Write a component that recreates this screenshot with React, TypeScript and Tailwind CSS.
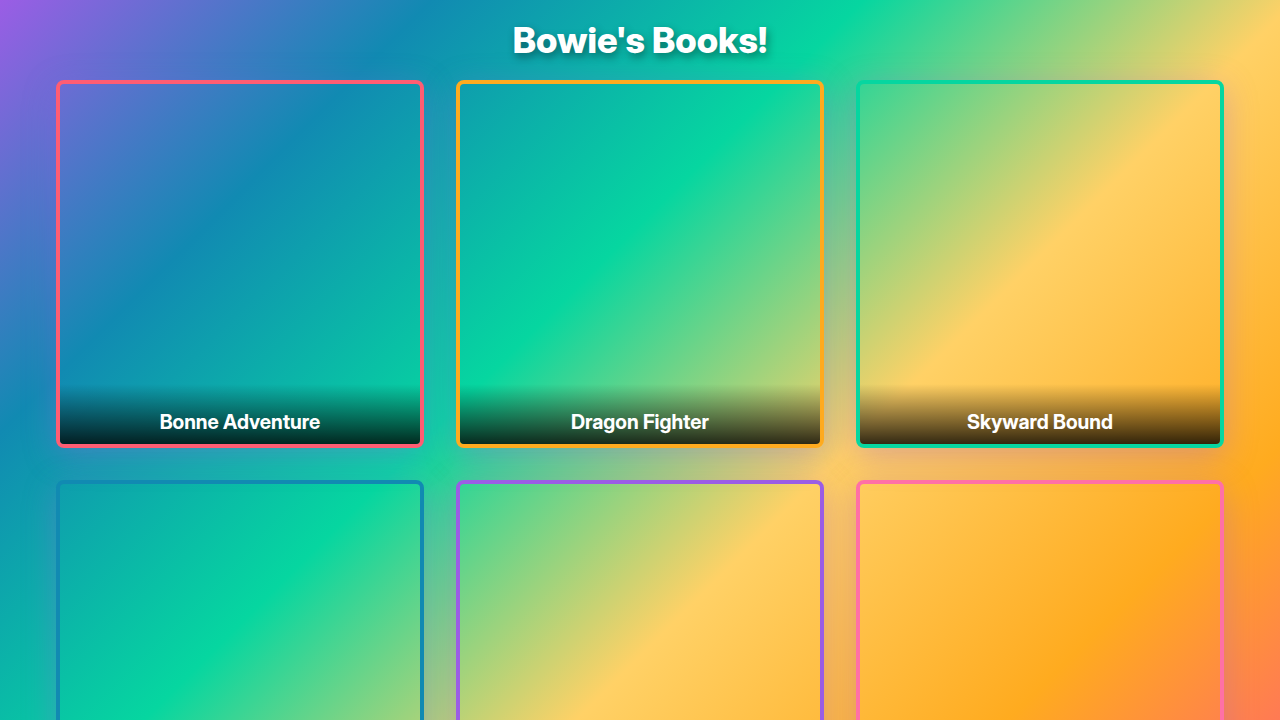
import React from "react";

type Book = { title: string; border: string };

const books: Book[] = [
  { title: "Bonne Adventure", border: "border-[#ff5d73]" },
  { title: "Dragon Fighter", border: "border-[#ffab1f]" },
  { title: "Skyward Bound", border: "border-[#06d6a0]" },
  { title: "Ocean Quest", border: "border-[#118ab2]" },
  { title: "Moonlight Magic", border: "border-[#9b5de5]" },
  { title: "Jungle Journey", border: "border-[#ff70a6]" },
];

function BookCard({ title, border }: Book) {
  return (
    <a
      href="#"
      className={`flex aspect-square flex-col justify-end overflow-hidden rounded-lg border-4 shadow-[0_8px_32px_rgba(155,93,229,0.35)] ${border}`}
    >
      <h2 className="bg-linear-to-t from-black/80 to-transparent px-4 pt-6 pb-2 text-center text-xl font-bold text-white">
        {title}
      </h2>
    </a>
  );
}

export default function App() {
  return (
    <div className="min-h-screen bg-[linear-gradient(135deg,#9b5de5_0%,#118ab2_20%,#06d6a0_40%,#ffd166_60%,#ffab1f_80%,#ff5d73_100%)] px-14 pt-5 pb-8 font-['Inter_Display','Inter',sans-serif]">
      <h1 className="mb-5 text-center text-4xl font-extrabold text-white [text-shadow:2px_4px_8px_rgba(0,0,0,0.4)]">
        Bowie's Books!
      </h1>
      <main className="grid grid-cols-3 gap-8">
        {books.map((book) => (
          <BookCard key={book.title} {...book} />
        ))}
      </main>
    </div>
  );
}
